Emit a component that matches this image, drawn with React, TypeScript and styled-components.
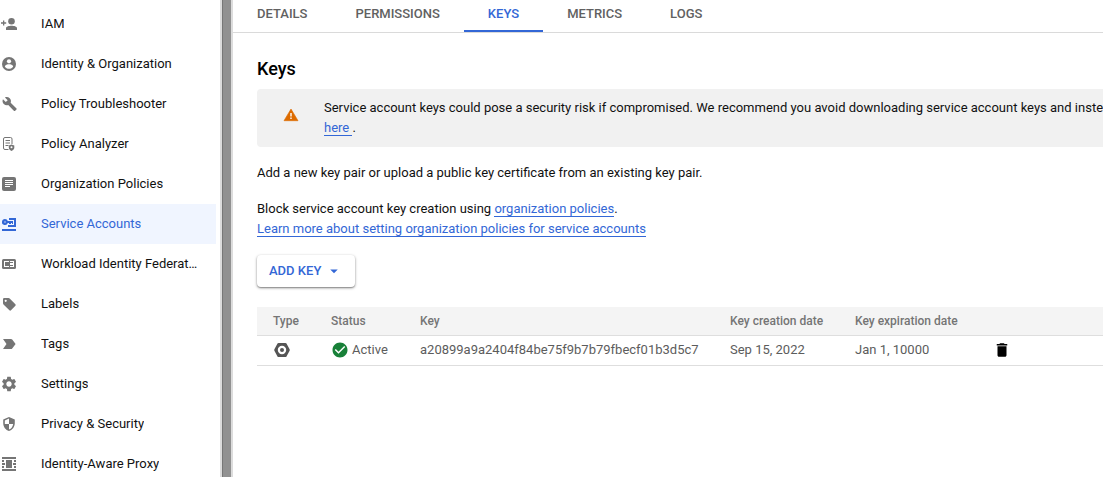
import React from "react";
import styled, { createGlobalStyle } from "styled-components";
import { MdArrowDropDown, MdCheckCircle, MdDelete, MdSettings } from "react-icons/md";

const blue = "#3367d6";

const GlobalStyle = createGlobalStyle`
  *, *::before, *::after { box-sizing: border-box; }
  body {
    margin: 0;
    background: #fff;
    color: #111;
    font: 400 13px/20px Roboto, "Liberation Sans", sans-serif;
    overflow: hidden;
  }
`;

const Page = styled.div`
  display: flex;
  height: 100vh;
  overflow: hidden;
`;

const Sidebar = styled.nav`
  flex: none;
  width: 220px;
  padding: 4px 4px 0 0;
  overflow: hidden;
`;

const NavList = styled.ul`
  list-style: none;
  margin: 0;
  padding: 0;
`;

const NavLink = styled.a<{ $active?: boolean }>`
  display: flex;
  align-items: center;
  gap: 23px;
  height: 40px;
  padding-right: 16px;
  color: ${(p) => (p.$active ? blue : "#111")};
  background: ${(p) => (p.$active ? "#f0f5ff" : "transparent")};
  text-decoration: none;
  white-space: nowrap;

  svg {
    flex: none;
    width: 18px;
    height: 18px;
    color: ${(p) => (p.$active ? blue : "#757575")};
  }
`;

const NavText = styled.span`
  overflow: hidden;
  text-overflow: ellipsis;
`;

const Splitter = styled.div`
  flex: none;
  width: 13px;
  background: #919191;
  border: solid #dcdcdc;
  border-width: 0 2px;
  box-shadow: inset 1px 0 #777;
`;

const Main = styled.main`
  flex: 1;
  min-width: 0;
  overflow: hidden;
`;

const Tabs = styled.div`
  display: flex;
  height: 33px;
  border-bottom: 1px solid #dadada;
`;

const Tab = styled.button<{ $active?: boolean }>`
  height: 32px;
  padding: 0 24px 2px;
  border: 0;
  border-bottom: 2px solid ${(p) => (p.$active ? blue : "transparent")};
  background: none;
  color: ${(p) => (p.$active ? blue : "#616161")};
  font: inherit;
  font-weight: 500;
`;

const Content = styled.div`
  padding: 24px 0 0 24px;
`;

const Title = styled.h1`
  margin: 0 0 8px;
  font-size: 18px;
  line-height: 24px;
  font-weight: 500;
  color: #000;
`;

const Alert = styled.div`
  display: flex;
  align-items: flex-start;
  gap: 24px;
  padding: 9px 0 9px 25px;
  background: #f1f1f1;
  border-radius: 4px 0 0 4px;
  white-space: nowrap;

  svg {
    flex: none;
    width: 18px;
    height: 18px;
    margin-top: 8px;
    color: #dd6b00;
  }
`;

const Text = styled.p`
  margin: 16px 0;
`;

const Link = styled.a`
  color: ${blue};
  text-decoration: none;
  white-space: pre;
  border-bottom: 1px solid ${blue};
`;

const AddButton = styled.button`
  display: flex;
  align-items: center;
  height: 32px;
  padding: 0 12px;
  gap: 4px;
  border: 0;
  border-radius: 4px;
  background: #fff;
  box-shadow: 0 1px 3px rgba(0, 0, 0, 0.4), 0 1px 1px rgba(0, 0, 0, 0.2);
  color: ${blue};
  font: inherit;
  font-weight: 500;

  svg {
    width: 18px;
    height: 18px;
  }
`;

const Table = styled.table`
  width: 100%;
  margin-top: 20px;
  table-layout: fixed;
  border-collapse: separate;
  border-spacing: 0;
  color: #5c5c5c;
`;

const Th = styled.th<{ $width?: number }>`
  width: ${(p) => (p.$width ? `${p.$width}px` : "auto")};
  height: 29px;
  padding: 0 0 0 16px;
  background: #f4f4f4;
  border-bottom: 1px solid #dedede;
  color: #757575;
  font-size: 12px;
  font-weight: 500;
  text-align: left;
  white-space: nowrap;
`;

const Td = styled.td`
  height: 30px;
  padding: 0 0 2px 16px;
  border-bottom: 1px solid #dedede;
  white-space: nowrap;

  svg {
    display: block;
    width: 18px;
    height: 18px;
  }
`;

const Status = styled.span`
  display: flex;
  align-items: center;
  gap: 3px;

  svg {
    color: #188038;
  }
`;

const IconButton = styled.button`
  display: block;
  padding: 0;
  border: 0;
  background: none;
  color: #000;
`;

const PersonAddIcon = () => (
  <svg viewBox="0 0 18 18" fill="currentColor" aria-hidden="true">
    <circle cx="11.500" cy="6.200" r="3.300" />
    <path d="M6 15V13.200C6 11.600 9.300 10.800 11.500 10.800S17 11.600 17 13.200V15ZM3 5.500H4.300V7.300H6.200V8.700H4.300V10.500H3V8.700H1V7.300H3Z" />
  </svg>
);

const AccountIcon = () => (
  <svg viewBox="0 0 18 18" aria-hidden="true">
    <circle cx="9" cy="9" r="7" fill="currentColor" />
    <circle cx="9" cy="6.300" r="2.100" fill="#fff" />
    <path d="M4.800 11.400C5 9.900 7.500 9.300 9 9.300S13 9.900 13.200 11.400C12.300 12.900 10.800 13.800 9 13.800S5.700 12.900 4.800 11.400Z" fill="#fff" />
  </svg>
);

const WrenchIcon = () => (
  <svg viewBox="-3 -2 28 28" fill="currentColor" aria-hidden="true">
    <path d="M22.700 19l-9.100-9.100c.9-2.300.4-5-1.500-6.900-2-2-5-2.400-7.400-1.300L9 6 6 9 1.600 4.700C.4 7.100.9 10.100 2.900 12.100c1.900 1.900 4.600 2.400 6.900 1.500l9.100 9.100c.4.4 1 .4 1.400 0l2.300-2.300c.5-.4.5-1.100.1-1.400z" />
  </svg>
);

const PolicyAnalyzerIcon = () => (
  <svg viewBox="0 0 18 18" fill="none" stroke="currentColor" aria-hidden="true">
    <path d="M8.5 14.5H5A1.5 1.5 0 0 1 3.5 13V4A1.5 1.5 0 0 1 5 2.5H10.500A1.500 1.500 0 0 1 12 4V9" />
    <path d="M5.500 5.500H10M5.500 8H10M5.500 10.500H8.500" />
    <path d="M11.500 9.500L14.300 10.500V12.800C14.300 14.500 12.500 15.500 11.500 16C10.500 15.500 8.800 14.500 8.800 12.800V10.500Z" fill="currentColor" stroke="none" />
    <circle cx="11.500" cy="12.300" r="1" fill="#fff" stroke="none" />
  </svg>
);

const ArticleIcon = () => (
  <svg viewBox="0 0 18 18" aria-hidden="true">
    <rect x="2" y="2" width="14" height="14" rx="2" fill="currentColor" />
    <path d="M5 5.500H13M5 7.500H13M5 9.500H13M5 11.500H10" stroke="#fff" />
  </svg>
);

const ServiceAccountIcon = () => (
  <svg viewBox="0 0 18 18" fill="currentColor" aria-hidden="true">
    <path fillRule="evenodd" d="M5 4a3 3 0 0 1 2.800 2H13V9H12V8H11V9H9V8H7.800A3 3 0 1 1 5 4ZM5 6.300a.7.7 0 1 0 0 1.400a.7.7 0 0 0 0-1.400Z" />
    <path d="M9 3H16V12H8V10H14V5H9ZM2 14H16V16H2Z" />
  </svg>
);

const WorkloadIcon = () => (
  <svg viewBox="0 0 18 18" aria-hidden="true">
    <rect x="2" y="4" width="14" height="10" rx="1.500" fill="currentColor" />
    <path d="M4 6H14V12H4Z" fill="#fff" />
    <path d="M5 7H9V11H5ZM10 7H13V8H10ZM10 10H13V11H10ZM9 6H10V12H9Z" fill="currentColor" />
  </svg>
);

const LabelIcon = () => (
  <svg viewBox="0 0 18 18" fill="currentColor" aria-hidden="true">
    <path fillRule="evenodd" d="M4.200 3H8.600Q9.200 3 9.700 3.500L15.400 9.200Q16.100 10 15.400 10.800L11 15.300Q10.200 16 9.400 15.300L3.500 9.400Q3 8.900 3 8.300V4.200Q3 3 4.200 3ZM5.700 4.700a1.100 1.100 0 1 0 0 2.200a1.100 1.100 0 0 0 0-2.200Z" />
  </svg>
);

const TagIcon = () => (
  <svg viewBox="0 0 18 18" fill="currentColor" aria-hidden="true">
    <path d="M3 4H11Q11.800 4 12.200 4.600L15.600 9L12.200 13.400Q11.800 14 11 14H3L6.500 9Z" />
  </svg>
);

const ShieldIcon = () => (
  <svg viewBox="-2 -2 28 28" fill="currentColor" aria-hidden="true">
    <path d="M12 1L3 5v6c0 5.550 3.840 10.740 9 12 5.160-1.260 9-6.450 9-12V5l-9-4zm0 10.990h6.500c-.53 4.120-2.780 7.290-6.500 8.440V12H5.500V6.500l6.500-2.900v8.390z" />
  </svg>
);

const ProxyIcon = () => (
  <svg viewBox="0 0 18 18" fill="currentColor" aria-hidden="true">
    <path d="M2 2H16V4H2ZM2 5H4V7H2ZM6 5H12V7H6ZM14 5H16V7H14ZM2 8H5V10H2ZM6 7H12V11H6ZM13 8H16V10H13ZM2 11H4V13H2ZM6 11H12V13H6ZM14 11H16V13H14ZM2 14H16V16H2Z" />
  </svg>
);

const WarningIcon = () => (
  <svg viewBox="0 0 18 18" aria-hidden="true">
    <path d="M9 3L16 14.700H2Z" fill="currentColor" stroke="currentColor" strokeWidth=".6" strokeLinejoin="round" />
    <path d="M9 7V10.500M9 11.500V13" stroke="#fff" strokeWidth="1.400" />
  </svg>
);

const KeyTypeIcon = () => (
  <svg viewBox="0 0 18 18" fill="#555" aria-label="Service account key" role="img">
    <path fillRule="evenodd" d="M5.500 2H12.500Q13.200 2 13.500 2.500L16.600 8.300Q17 9 16.600 9.700L13.500 15.500Q13.200 16 12.500 16H5.500Q4.800 16 4.500 15.500L1.400 9.700Q1 9 1.400 8.300L4.500 2.500Q4.800 2 5.500 2ZM9 4.800a4.200 4.200 0 1 0 0 8.400a4.200 4.200 0 0 0 0-8.400Z" />
    <circle cx="9" cy="9" r="2" />
  </svg>
);

const navItems = [
  { label: "IAM", icon: PersonAddIcon },
  { label: "Identity & Organization", icon: AccountIcon },
  { label: "Policy Troubleshooter", icon: WrenchIcon },
  { label: "Policy Analyzer", icon: PolicyAnalyzerIcon },
  { label: "Organization Policies", icon: ArticleIcon },
  { label: "Service Accounts", icon: ServiceAccountIcon, active: true },
  { label: "Workload Identity Federation", icon: WorkloadIcon },
  { label: "Labels", icon: LabelIcon },
  { label: "Tags", icon: TagIcon },
  { label: "Settings", icon: MdSettings },
  { label: "Privacy & Security", icon: ShieldIcon },
  { label: "Identity-Aware Proxy", icon: ProxyIcon },
];

const tabs = ["DETAILS", "PERMISSIONS", "KEYS", "METRICS", "LOGS"];

export default function App() {
  return (
    <Page>
      <GlobalStyle />
      <Sidebar>
        <NavList>
          {navItems.map(({ label, icon: Icon, active }) => (
            <li key={label}>
              <NavLink href="#" $active={active} aria-current={active ? "page" : undefined}>
                <Icon />
                <NavText>{label}</NavText>
              </NavLink>
            </li>
          ))}
        </NavList>
      </Sidebar>
      <Splitter />
      <Main>
        <Tabs role="tablist">
          {tabs.map((tab) => (
            <Tab key={tab} role="tab" aria-selected={tab === "KEYS"} $active={tab === "KEYS"}>
              {tab}
            </Tab>
          ))}
        </Tabs>
        <Content>
          <Title>Keys</Title>
          <Alert>
            <WarningIcon />
            <div>
              Service account keys could pose a security risk if compromised. We recommend you avoid downloading service account keys and instead
              <br />
              <Link href="#">{"here "}</Link>.
            </div>
          </Alert>
          <Text>Add a new key pair or upload a public key certificate from an existing key pair.</Text>
          <Text>
            Block service account key creation using <Link href="#">organization policies</Link>.
            <br />
            <Link href="#">Learn more about setting organization policies for service accounts</Link>
          </Text>
          <AddButton>
            ADD KEY
            <MdArrowDropDown />
          </AddButton>
          <Table>
            <thead>
              <tr>
                <Th $width={58}>Type</Th>
                <Th $width={89}>Status</Th>
                <Th $width={310}>Key</Th>
                <Th $width={125}>Key creation date</Th>
                <Th $width={138}>Key expiration date</Th>
                <Th aria-label="Actions" />
              </tr>
            </thead>
            <tbody>
              <tr>
                <Td><KeyTypeIcon /></Td>
                <Td>
                  <Status>
                    <MdCheckCircle />
                    Active
                  </Status>
                </Td>
                <Td>a20899a9a2404f84be75f9b7b79fbecf01b3d5c7</Td>
                <Td>Sep 15, 2022</Td>
                <Td>Jan 1, 10000</Td>
                <Td>
                  <IconButton aria-label="Delete key">
                    <MdDelete />
                  </IconButton>
                </Td>
              </tr>
            </tbody>
          </Table>
        </Content>
      </Main>
    </Page>
  );
}
